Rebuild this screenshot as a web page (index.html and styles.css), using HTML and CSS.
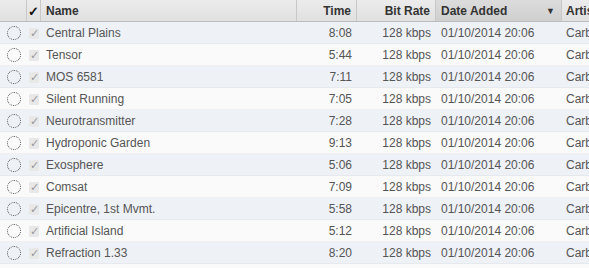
FILE: index.html
```
<!DOCTYPE html>
<html lang="en">
<head>
    <meta charset="UTF-8">
    <title>Songs</title>
    <link rel="stylesheet" href="styles.css">
</head>
<body>
    <div class="songs">
        <div class="row head">
            <div class="cell"></div>
            <div class="cell check-col"><span class="head-check">✓</span></div>
            <div class="cell name">Name</div>
            <div class="cell num">Time</div>
            <div class="cell num">Bit Rate</div>
            <div class="cell date sorted">Date Added <span class="arrow">▼</span></div>
            <div class="cell artist">Artist</div>
        </div>
        <div id="rows"></div>
    </div>
    <script>
        const songs = [
            ['Central Plains', '8:08'],
            ['Tensor', '5:44'],
            ['MOS 6581', '7:11'],
            ['Silent Running', '7:05'],
            ['Neurotransmitter', '7:28'],
            ['Hydroponic Garden', '9:13'],
            ['Exosphere', '5:06'],
            ['Comsat', '7:09'],
            ['Epicentre, 1st Mvmt.', '5:58'],
            ['Artificial Island', '5:12'],
            ['Refraction 1.33', '8:20'],
            ['', '']
        ];
        const rows = document.getElementById('rows');
        songs.forEach(function(song, i) {
            const row = document.createElement('div');
            row.className = 'row' + (i % 2 === 0 ? ' odd' : '');
            if (song[0]) {
                row.innerHTML =
                    '<div class="cell"><span class="cloud"></span></div>' +
                    '<div class="cell check-col"><span class="tick">✓</span></div>' +
                    '<div class="cell name">' + song[0] + '</div>' +
                    '<div class="cell num">' + song[1] + '</div>' +
                    '<div class="cell num">128 kbps</div>' +
                    '<div class="cell date">01/10/2014 20:06</div>' +
                    '<div class="cell artist">Carbon Based Lifeforms</div>';
            }
            rows.appendChild(row);
        });
    </script>
</body>
</html>
```
FILE: styles.css
```
body {
    margin: 0;
    font-family: 'Liberation Sans', Arial, sans-serif;
    font-size: 12px;
    background-color: #fafafa;
    overflow: hidden;
}
.songs {
    width: 589px;
    height: 268px;
    overflow: hidden;
}
.row {
    display: grid;
    grid-template-columns: 27px 14px 256px 60px 79px 126px 27px;
    height: 22px;
    background-color: #fafafa;
    border-bottom: 1px solid #f0f0f0;
    box-sizing: border-box;
    color: #555;
}
.row.odd {
    background-color: #eef1f5;
    border-bottom-color: #e6e9ee;
}
.cell {
    display: flex;
    align-items: center;
    white-space: nowrap;
    overflow: hidden;
    padding: 1px 5px 0;
    box-sizing: border-box;
}
.check-col {
    padding: 1px 0 0;
    justify-content: center;
}
.num {
    justify-content: flex-end;
}
.artist {
    padding-left: 4px;
    padding-right: 0;
}
.head {
    height: 22px;
    background: linear-gradient(#ececec, #e0e0e0);
    border-bottom: 1px solid #bdbdbd;
    color: #333;
    font-weight: bold;
}
.head .cell {
    border-right: 1px solid #c8c8c8;
}
.head .artist {
    border-right: none;
}
.head .sorted {
    background: linear-gradient(#dcdcdc, #cfcfcf);
    justify-content: space-between;
    padding-right: 6px;
}
.arrow {
    font-size: 9px;
    color: #333;
}
.head-check {
    color: #111;
    font-size: 13px;
}
.tick {
    display: inline-block;
    width: 10px;
    height: 11px;
    line-height: 11px;
    text-align: center;
    background-color: #e8e8e8;
    color: #999;
    font-size: 11px;
    border-radius: 1px;
}
.cloud {
    display: inline-block;
    width: 12px;
    height: 12px;
    margin-left: 2px;
    border: 1px dotted #555;
    border-radius: 50%;
}
```
